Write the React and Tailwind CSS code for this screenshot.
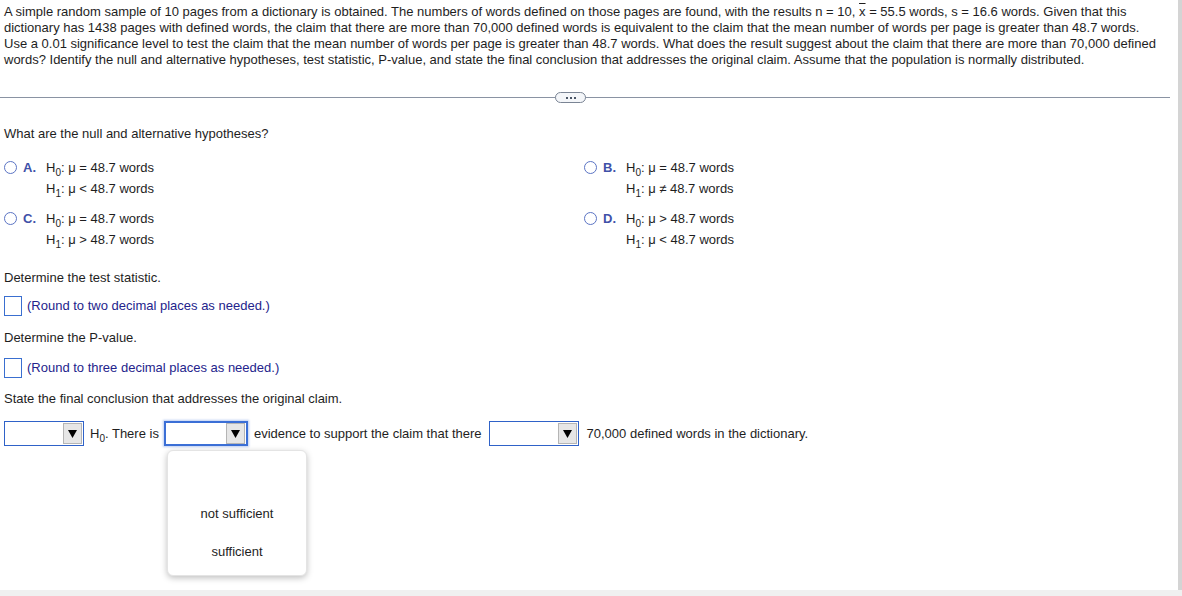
import React from "react";

const H = ({ n }) => (
  <span>
    H<sub className="text-[10px] relative top-[1px] align-sub leading-none">{n}</sub>
  </span>
);

const Radio = () => (
  <span className="inline-block w-[13px] h-[13px] rounded-full border border-[#5b74c4] bg-white shrink-0" />
);

const Option = ({ letter, h0, h1 }) => (
  <div className="flex items-start">
    <div className="flex items-center h-[21px] w-[42px]">
      <Radio />
      <span className="ml-[6px] font-bold text-[#3f51a8]">{letter}.</span>
    </div>
    <div className="flex flex-col">
      <div className="h-[21px] flex items-center">
        <H n="0" />
        <span>:&nbsp;μ{h0}48.7 words</span>
      </div>
      <div className="h-[21px] flex items-center">
        <H n="1" />
        <span>:&nbsp;μ{h1}48.7 words</span>
      </div>
    </div>
  </div>
);

const Select = ({ w, focused }) => (
  <div
    className={
      "relative h-[25px] bg-white flex justify-end items-center " +
      (focused
        ? "border-2 border-[#3b6fd6] shadow-[0_0_2px_1px_rgba(59,111,214,0.35)] pr-[1px]"
        : "border border-[#2f62c8] pr-[1px]")
    }
    style={{ width: w }}
  >
    <div className="w-[19px] h-[21px] bg-[#e6e6e6] border border-[#b5b5b5] flex items-center justify-center">
      <svg width="9" height="10" viewBox="0 0 9 10">
        <path d="M0 1 L9 1 L4.5 9 Z" fill="#000" />
      </svg>
    </div>
  </div>
);

export default function App() {
  return (
    <div
      className="w-[1182px] h-[596px] overflow-hidden bg-white text-[13px] text-[#1e1e1e]"
      style={{ fontFamily: '"Liberation Sans", Arial, sans-serif' }}
    >
      <div className="flex h-[590px]">
        <div className="w-[1178px] relative">
          <p className="pl-[4px] pt-[4px] w-[1160px] leading-[16px]">
            A simple random sample of 10 pages from a dictionary is obtained. The numbers of words defined on those pages are found, with the results n = 10,{" "}
            <span className="overline">x</span> = 55.5 words, s = 16.6 words. Given that this dictionary has 1438 pages with defined words, the claim that there are more than 70,000 defined words is equivalent to the claim that the mean number of words per page is greater than 48.7 words. Use a 0.01 significance level to test the claim that the mean number of words per page is greater than 48.7 words. What does the result suggest about the claim that there are more than 70,000 defined words? Identify the null and alternative hypotheses, test statistic, P-value, and state the final conclusion that addresses the original claim. Assume that the population is normally distributed.
          </p>

          <div className="relative w-[1170px] mt-[29px] h-[1px] bg-[#8a93a3]">
            <div className="absolute left-[555px] top-[-5px] w-[31px] h-[11px] rounded-full border border-[#7a8494] bg-[#f4f6f9] flex items-center justify-center gap-[2px]">
              <span className="w-[2px] h-[2px] bg-[#4a5566]" />
              <span className="w-[2px] h-[2px] bg-[#4a5566]" />
              <span className="w-[2px] h-[2px] bg-[#4a5566]" />
            </div>
          </div>

          <div className="pl-[4px] mt-[28px] leading-[16px]">What are the null and alternative hypotheses?</div>

          <div className="grid grid-cols-[580px_1fr] pl-[4px] mt-[15px] gap-y-[9px]">
            <Option letter="A" h0=" = " h1=" < " />
            <Option letter="B" h0=" = " h1=" ≠ " />
            <Option letter="C" h0=" = " h1=" > " />
            <Option letter="D" h0=" > " h1=" < " />
          </div>

          <div className="pl-[4px] mt-[20px] leading-[16px]">Determine the test statistic.</div>
          <div className="pl-[4px] mt-[10px] flex items-center h-[20px]">
            <span className="w-[18px] h-[20px] border border-[#3a6fd0] bg-white" />
            <span className="ml-[5px] text-[#24248c]">(Round to two decimal places as needed.)</span>
          </div>

          <div className="pl-[4px] mt-[14px] leading-[16px]">Determine the P-value.</div>
          <div className="pl-[4px] mt-[12px] flex items-center h-[20px]">
            <span className="w-[18px] h-[20px] border border-[#3a6fd0] bg-white" />
            <span className="ml-[5px] text-[#24248c]">(Round to three decimal places as needed.)</span>
          </div>

          <div className="pl-[4px] mt-[13px] leading-[16px]">State the final conclusion that addresses the original claim.</div>

          <div className="relative pl-[4px] mt-[14px] flex items-center h-[25px]">
            <Select w={80} />
            <span className="ml-[6px]">
              <H n="0" />. There is
            </span>
            <div className="ml-[5px]">
              <Select w={84} focused />
            </div>
            <span className="ml-[6px]">evidence to support the claim that there</span>
            <div className="ml-[7px]">
              <Select w={90} />
            </div>
            <span className="ml-[8px]">70,000 defined words in the dictionary.</span>

            <div className="absolute left-[167px] top-[29px] w-[140px] h-[126px] bg-white rounded-[6px] border border-[#e4e4e4] shadow-[0_2px_6px_rgba(0,0,0,0.25)] flex flex-col items-center">
              <div className="mt-[55px] leading-[16px]">not sufficient</div>
              <div className="mt-[22px] leading-[16px]">sufficient</div>
            </div>
          </div>
        </div>
        <div className="w-[4px] bg-[#d4d4d4]" />
      </div>
      <div className="h-[6px] bg-[#f0f0f0]" />
    </div>
  );
}
